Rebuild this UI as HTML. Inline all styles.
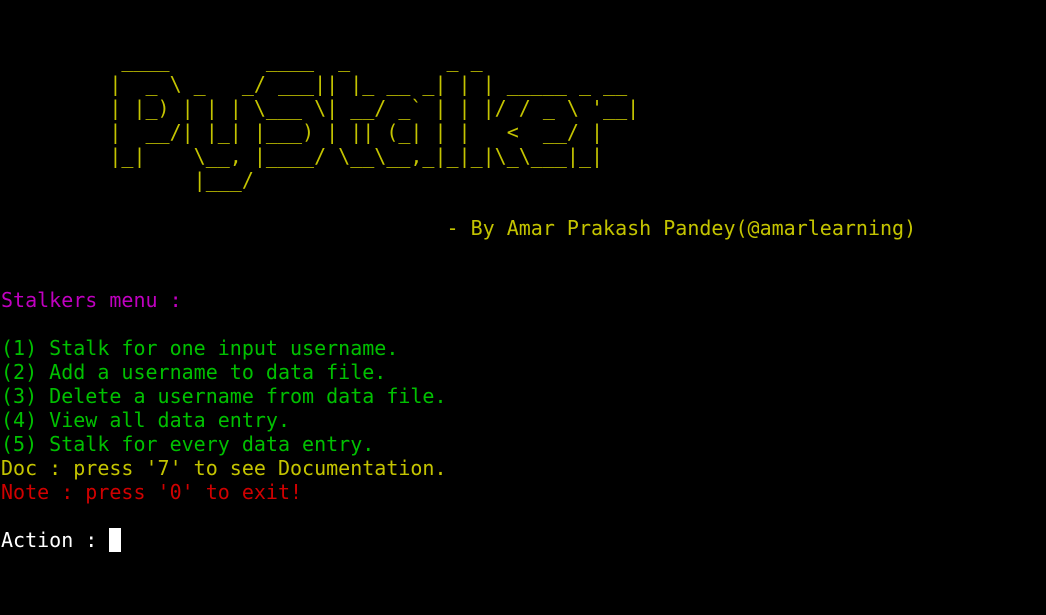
<!DOCTYPE html>
<html><head><style>
html,body{margin:0;padding:0;background:#000;width:1046px;height:615px;overflow:hidden}
pre{margin:0;font-family:"DejaVu Sans Mono",monospace;font-size:20px;line-height:24px;color:#fff;position:absolute;left:1px;top:0;white-space:pre}
.y{color:#c4c400}.g{color:#00c000}.m{color:#c000c0}.r{color:#d00000}.cur{background:#fff;color:#fff}
</style></head><body><pre>&#32;

<span class="y">          ____        ____  _        _ _
         |  _ \ _   _/ ___|| |_ __ _| | | _____ _ __
         | |_) | | | \___ \| __/ _` | | |/ / _ \ '__|
         |  __/| |_| |___) | || (_| | |   &lt;  __/ |
         |_|    \__, |____/ \__\__,_|_|_|\_\___|_|
                |___/</span>

<span class="y">                                     - By Amar Prakash Pandey(@amarlearning)</span>


<span class="m">Stalkers menu :</span>

<span class="g">(1) Stalk for one input username.
(2) Add a username to data file.
(3) Delete a username from data file.
(4) View all data entry.
(5) Stalk for every data entry.</span>
<span class="y">Doc : press '7' to see Documentation.</span>
<span class="r">Note : press '0' to exit!</span>

Action : <span class="cur"> </span>
</pre></body></html>
